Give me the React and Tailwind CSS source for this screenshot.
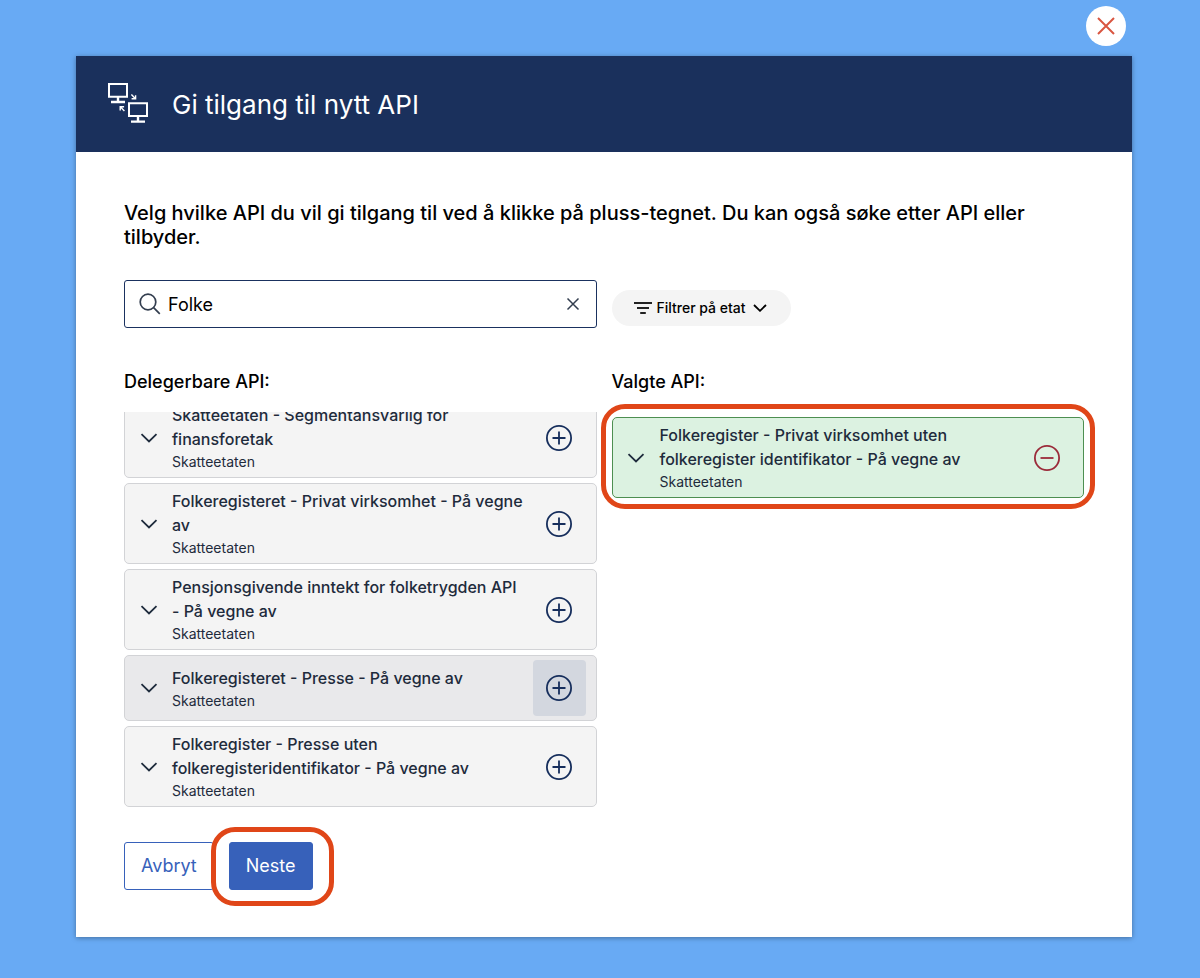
import { useState } from "react";

const available = [
  "Skatteetaten - Segmentansvarlig for finansforetak",
  "Folkeregisteret - Privat virksomhet - På vegne av",
  "Pensjonsgivende inntekt for folketrygden API - På vegne av",
  "Folkeregisteret - Presse - På vegne av",
  "Folkeregister - Presse uten folkeregisteridentifikator - På vegne av",
];

function ApiIcon() {
  return (
    <svg viewBox="0 0 40 40" className="mb-0.5 size-10 shrink-0" fill="none" stroke="#fff" aria-hidden="true">
      <path strokeWidth="2" d="M1 1h18v12.7H1zM21 20.3h18V33H21z" />
      <path strokeWidth="2.3" d="M3 19h14M23 38.7h14" />
      <path strokeWidth="2.4" d="M10 14v5M30 33v5" />
      <path strokeWidth="1.4" d="M23.4 11.6l3.8 3.8M27.6 12.2v3.5h-4M16.4 27.9l-3.8-3.8M12.2 27.6v-3.8h3.9" />
    </svg>
  );
}

function Chevron() {
  return (
    <svg viewBox="0 0 18 12" className="h-3 w-[18px]" fill="none" stroke="currentColor" strokeWidth="1.8" aria-hidden="true">
      <path d="M1.5 2.2 9 9.4l7.5-7.2" />
    </svg>
  );
}

function CircleIcon({ plus }) {
  return (
    <svg viewBox="0 0 26 26" className="size-[26px]" fill="none" stroke="currentColor" strokeWidth="1.8" aria-hidden="true">
      <circle cx="13" cy="13" r="12.1" />
      <path d={plus ? "M6.5 13h13M13 6.5v13" : "M6.5 13h13"} />
    </svg>
  );
}

function ApiCard({ name, selected, active }) {
  const tone = selected
    ? "border-[#4d8f51] bg-[#dcf2e1]"
    : active
      ? "border-[#d2d3d6] bg-[#e9e9eb]"
      : "border-[#d2d3d6] bg-[#f4f4f4]";
  return (
    <li className={`flex items-center rounded-[5px] border py-1 pr-2.5 text-[#1e2b3c] ${tone}`}>
      <button type="button" aria-label={`Vis mer om ${name}`} className="flex h-12 w-[47px] shrink-0 items-center justify-center">
        <Chevron />
      </button>
      <div className="min-w-0 flex-1 pt-px pr-2">
        <p className="text-base leading-6 font-medium">{name}</p>
        <p className="text-sm leading-[22px]">Skatteetaten</p>
      </div>
      <button
        type="button"
        aria-label={`${selected ? "Fjern" : "Legg til"} ${name}`}
        className={`flex h-14 w-[53px] shrink-0 items-center justify-center rounded ${selected ? "text-[#9b2b3a]" : "text-[#162e5c]"} ${active ? "bg-[#d3d7df]" : ""}`}
      >
        <CircleIcon plus={!selected} />
      </button>
    </li>
  );
}

export default function App() {
  const [query, setQuery] = useState("Folke");
  return (
    <div className="min-h-screen bg-[#68aaf4] pt-14 pr-[68px] pb-10 pl-[76px] font-['Inter',sans-serif] text-black">
      <main className="relative bg-white shadow-[0_1px_5px_rgba(0,0,0,0.35)]">
        <button type="button" aria-label="Lukk" className="absolute -top-[50px] right-1.5 flex size-10 items-center justify-center rounded-full bg-white">
          <svg viewBox="0 0 18 18" className="size-[18px]" fill="none" stroke="#d95540" strokeWidth="2" aria-hidden="true">
            <path d="m1 1 16 16M17 1 1 17" />
          </svg>
        </button>

        <header className="flex h-24 items-center gap-6 bg-[#1a305c] px-8 text-white">
          <ApiIcon />
          <h1 className="pt-0.5 text-[26px] leading-8">Gi tilgang til nytt API</h1>
        </header>

        <div className="px-12 pt-[49px] pb-[47px]">
          <h2 className="text-xl leading-6 font-medium">
            Velg hvilke API du vil gi tilgang til ved å klikke på pluss-tegnet. Du kan også søke etter API eller tilbyder.
          </h2>

          <div className="mt-[31px] grid grid-cols-2 gap-x-[15px]">
            <div className="flex h-12 items-center rounded-[3px] border border-[#1a315f] pr-[7px] pl-[13px]">
              <label htmlFor="api-search" aria-label="Søk etter API" className="shrink-0">
                <svg viewBox="0 0 24 24" className="size-6" fill="none" stroke="#333e4f" strokeWidth="1.7" aria-hidden="true">
                  <circle cx="10" cy="10" r="7.8" />
                  <path d="m15.6 15.6 6.2 6.2" />
                </svg>
              </label>
              <input
                id="api-search"
                type="text"
                value={query}
                onChange={(e) => setQuery(e.target.value)}
                className="min-w-0 flex-1 pt-0.5 pl-1.5 text-lg outline-none"
              />
              <button type="button" aria-label="Tøm søk" onClick={() => setQuery("")} className="flex size-8 items-center justify-center">
                <svg viewBox="0 0 14 14" className="size-3.5" fill="none" stroke="#333e4f" strokeWidth="1.5" aria-hidden="true">
                  <path d="m1.5 1.5 11 11M12.5 1.5l-11 11" />
                </svg>
              </button>
            </div>
            <div className="pt-2.5">
              <button type="button" className="flex h-9 items-center rounded-full bg-[#f4f4f4] pr-6 pl-[22px] text-sm font-medium">
                <svg viewBox="0 0 18 12" className="mr-[5px] h-3 w-[18px]" fill="none" stroke="#222" strokeWidth="1.8" aria-hidden="true">
                  <path d="M0 1h18M3 6h12M6.2 11h5.6" />
                </svg>
                Filtrer på etat
                <svg viewBox="0 0 14 8" className="ml-[7px] h-2 w-3.5" fill="none" stroke="currentColor" strokeWidth="1.8" aria-hidden="true">
                  <path d="m1 1 6 5.8L13 1" />
                </svg>
              </button>
            </div>
          </div>

          <div className="mt-10 grid grid-cols-2 items-start gap-x-[15px]">
            <section>
              <h3 className="text-lg leading-7 font-medium">Delegerbare API:</h3>
              <div className="mt-4 flex max-h-[395px] flex-col-reverse overflow-y-auto [scrollbar-width:none]">
                <ul className="flex flex-col gap-[5px]">
                  {available.map((name, i) => (
                    <ApiCard key={name} name={name} active={i === 3} />
                  ))}
                </ul>
              </div>
            </section>
            <section>
              <h3 className="text-lg leading-7 font-medium">Valgte API:</h3>
              <div className="relative mt-[21px]">
                <ul>
                  <ApiCard name="Folkeregister - Privat virksomhet uten folkeregister identifikator - På vegne av" selected />
                </ul>
                <div className="pointer-events-none absolute -inset-x-[11px] -top-[13px] -bottom-[11px] rounded-3xl border-5 border-[#e04618]" />
              </div>
            </section>
          </div>

          <div className="mt-[35px] flex gap-[15px] text-lg">
            <button type="button" className="h-12 rounded-[3px] border border-[#3761ba] px-4 text-[#3761ba]">Avbryt</button>
            <div className="relative">
              <button type="button" className="h-12 rounded-[3px] border border-[#3761ba] bg-[#3761ba] px-4 text-white">Neste</button>
              <div className="pointer-events-none absolute -top-[15px] -right-[21px] -bottom-4 -left-[18px] rounded-3xl border-5 border-[#e04618]" />
            </div>
          </div>
        </div>
      </main>
    </div>
  );
}
